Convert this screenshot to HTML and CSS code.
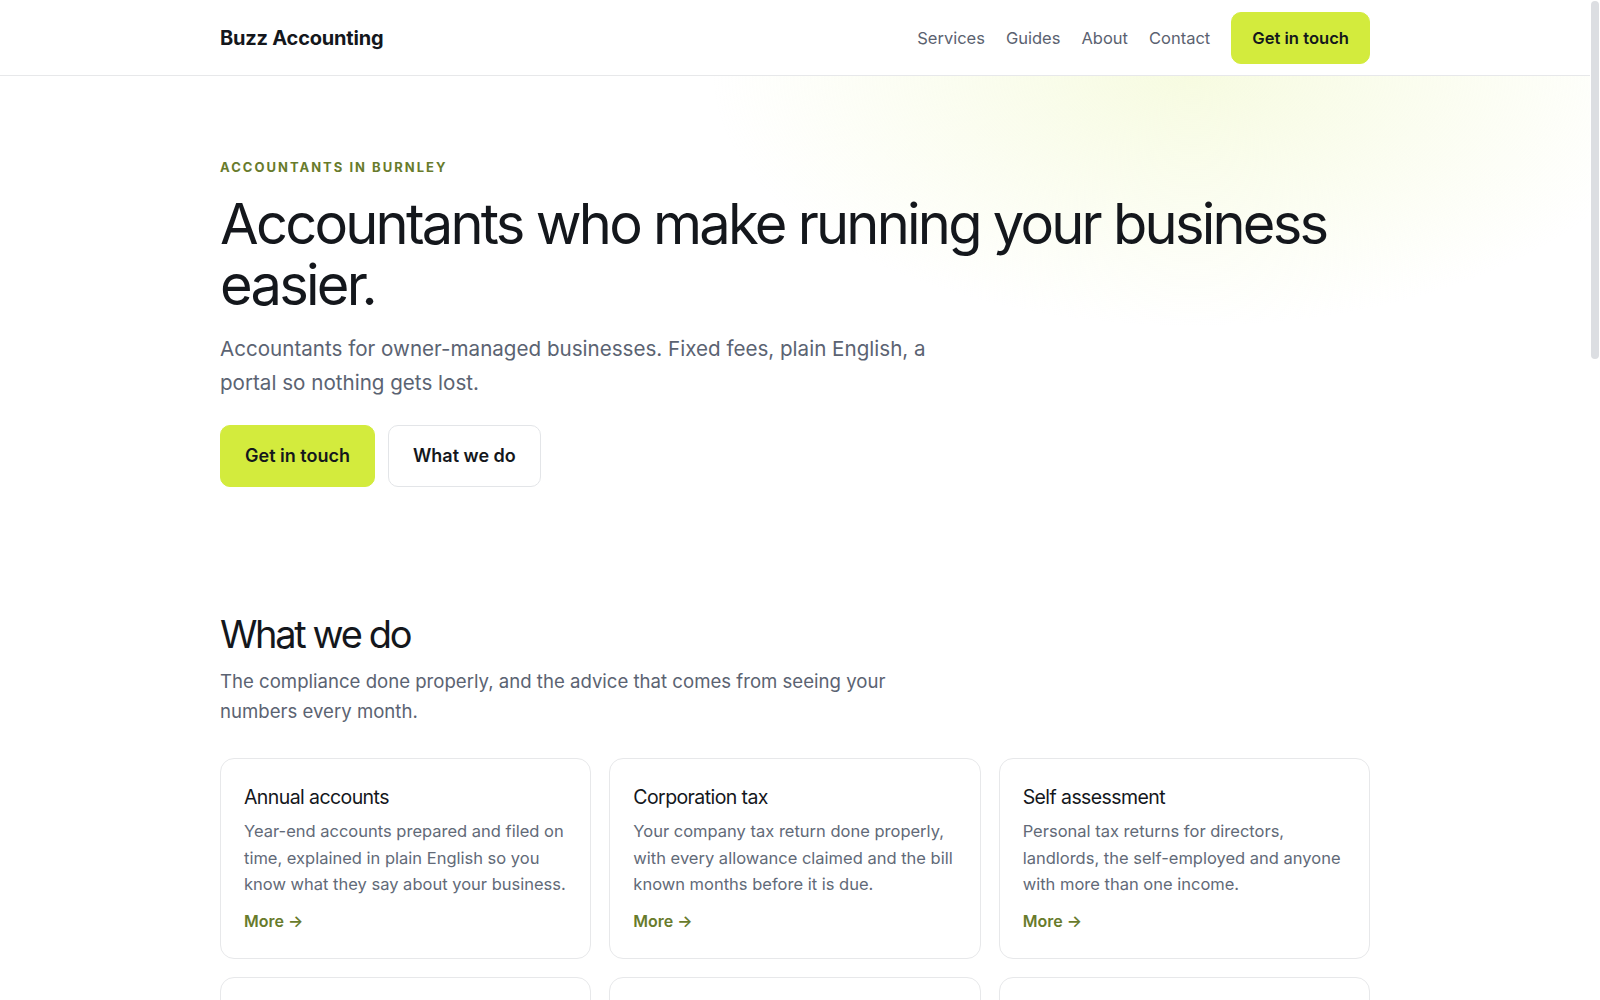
FILE: index.html
```html
<!DOCTYPE html>
<html lang="en">
<head>
<meta charset="utf-8">
<title>Buzz Accounting</title>
<link rel="stylesheet" href="styles.css">
</head>
<body>
<header class="site-header">
  <div class="container header-inner">
    <a class="logo" href="#">Buzz Accounting</a>
    <nav class="nav">
      <a class="nav-link" href="#">Services</a>
      <a class="nav-link" href="#">Guides</a>
      <a class="nav-link" href="#">About</a>
      <a class="nav-link" href="#">Contact</a>
      <a class="btn btn-primary btn-nav" href="#">Get in touch</a>
    </nav>
  </div>
</header>
<main>
  <section class="hero">
    <div class="container">
      <p class="eyebrow">Accountants in Burnley</p>
      <h1 class="hero-title">Accountants who make running your business easier.</h1>
      <p class="hero-lead">Accountants for owner-managed businesses. Fixed fees, plain English, a portal so nothing gets lost.</p>
      <div class="hero-actions">
        <a class="btn btn-primary btn-lg" href="#">Get in touch</a>
        <a class="btn btn-outline btn-lg" href="#">What we do</a>
      </div>
    </div>
  </section>
  <section class="services">
    <div class="container">
      <h2 class="section-title">What we do</h2>
      <p class="section-lead">The compliance done properly, and the advice that comes from seeing your numbers every month.</p>
      <div class="card-grid">
        <article class="card">
          <h3 class="card-title">Annual accounts</h3>
          <p class="card-text">Year-end accounts prepared and filed on time, explained in plain English so you know what they say about your business.</p>
          <a class="card-link" href="#">More →</a>
        </article>
        <article class="card">
          <h3 class="card-title">Corporation tax</h3>
          <p class="card-text">Your company tax return done properly, with every allowance claimed and the bill known months before it is due.</p>
          <a class="card-link" href="#">More →</a>
        </article>
        <article class="card">
          <h3 class="card-title">Self assessment</h3>
          <p class="card-text">Personal tax returns for directors, landlords, the self-employed and anyone with more than one income.</p>
          <a class="card-link" href="#">More →</a>
        </article>
        <article class="card">
          <h3 class="card-title">VAT returns</h3>
          <p class="card-text">Quarterly VAT returns filed under Making Tax Digital, checked before they go and never late.</p>
          <a class="card-link" href="#">More →</a>
        </article>
        <article class="card">
          <h3 class="card-title">Payroll</h3>
          <p class="card-text">Payslips, RTI submissions and pensions handled each month so your team is paid right and on time.</p>
          <a class="card-link" href="#">More →</a>
        </article>
        <article class="card">
          <h3 class="card-title">Bookkeeping</h3>
          <p class="card-text">Books kept up to date in the cloud, so the numbers are ready whenever you need them.</p>
          <a class="card-link" href="#">More →</a>
        </article>
      </div>
    </div>
  </section>
</main>
<div class="fake-scrollbar" aria-hidden="true"><div class="fake-thumb"></div></div>
</body>
</html>
```
FILE: styles.css
```css
* { box-sizing: border-box; }
html, body { margin: 0; padding: 0; }
body {
  font-family: Inter, "Noto Sans", "Liberation Sans", sans-serif;
  color: #111827;
  background: #ffffff;
  padding-right: 10px;
  -webkit-font-smoothing: antialiased;
}
a { text-decoration: none; color: inherit; }
h1, h2, h3, p { margin: 0; }

.container {
  max-width: 1198px;
  margin: 0 auto;
  padding: 0 24px;
}

.site-header {
  background: #ffffff;
  border-bottom: 1px solid #e7e8ea;
}
.header-inner {
  height: 75px;
  display: flex;
  align-items: center;
  justify-content: space-between;
}
.logo {
  font-size: 20px;
  font-weight: 700;
  letter-spacing: -0.01em;
  color: #14171c;
}
.nav {
  display: flex;
  align-items: center;
  gap: 21px;
}
.nav-link {
  font-size: 16.5px;
  color: #5b6270;
}

.btn {
  display: inline-flex;
  align-items: center;
  justify-content: center;
  font-weight: 600;
  border-radius: 10px;
  color: #14171c;
}
.btn-primary {
  background: #d3eb3d;
  border: 1px solid #d3eb3d;
}
.btn-outline {
  background: #ffffff;
  border: 1px solid #e3e5e8;
}
.btn-nav {
  font-size: 16.6px;
  line-height: 24px;
  padding: 13px 20px;
}
.btn-lg {
  font-size: 18px;
  line-height: 26px;
  padding: 17px 24px;
}

.hero {
  padding: 82px 0 60px;
  background:
    radial-gradient(ellipse 480px 250px at 75% 0%, rgba(240, 248, 200, 0.55), rgba(255, 255, 255, 0) 100%),
    #ffffff;
}
.eyebrow {
  font-size: 13px;
  line-height: 18px;
  font-weight: 700;
  letter-spacing: 0.155em;
  text-transform: uppercase;
  color: #687b2c;
}
.hero-title {
  margin-top: 18px;
  font-size: 56px;
  line-height: 61px;
  font-weight: 400;
  letter-spacing: -0.049em;
  color: #14171c;
}
.hero-lead {
  margin-top: 16px;
  max-width: 720px;
  font-size: 20.6px;
  line-height: 33.6px;
  color: #5b6372;
}
.hero-actions {
  margin-top: 26px;
  display: flex;
  gap: 13px;
}

.services {
  padding: 63px 0 80px;
}
.section-title {
  font-size: 38px;
  line-height: 48px;
  font-weight: 400;
  letter-spacing: -0.062em;
  color: #14171c;
}
.section-lead {
  margin-top: 9px;
  max-width: 720px;
  font-size: 18.6px;
  line-height: 29.6px;
  color: #5b6372;
}
.card-grid {
  margin-top: 32px;
  display: grid;
  grid-template-columns: repeat(3, 1fr);
  gap: 18px;
}
.card {
  border: 1px solid #e7e8ea;
  border-radius: 14px;
  padding: 24px 22px 25px 23px;
  background: #ffffff;
}
.card-title {
  font-size: 19.5px;
  line-height: 28px;
  font-weight: 400;
  letter-spacing: -0.03em;
  color: #14171c;
}
.card-text {
  margin-top: 7px;
  font-size: 16.5px;
  line-height: 26.4px;
  color: #626a78;
}
.card-link {
  display: inline-block;
  margin-top: 11px;
  font-size: 16px;
  line-height: 24px;
  font-weight: 600;
  color: #687b2c;
}

.fake-scrollbar {
  position: fixed;
  top: 0;
  right: 0;
  width: 10px;
  height: 100%;
  background: #ffffff;
}
.fake-thumb {
  position: absolute;
  top: 1px;
  left: 1px;
  width: 8px;
  height: 358px;
  border-radius: 4px;
  background: #dcdee2;
}
```
